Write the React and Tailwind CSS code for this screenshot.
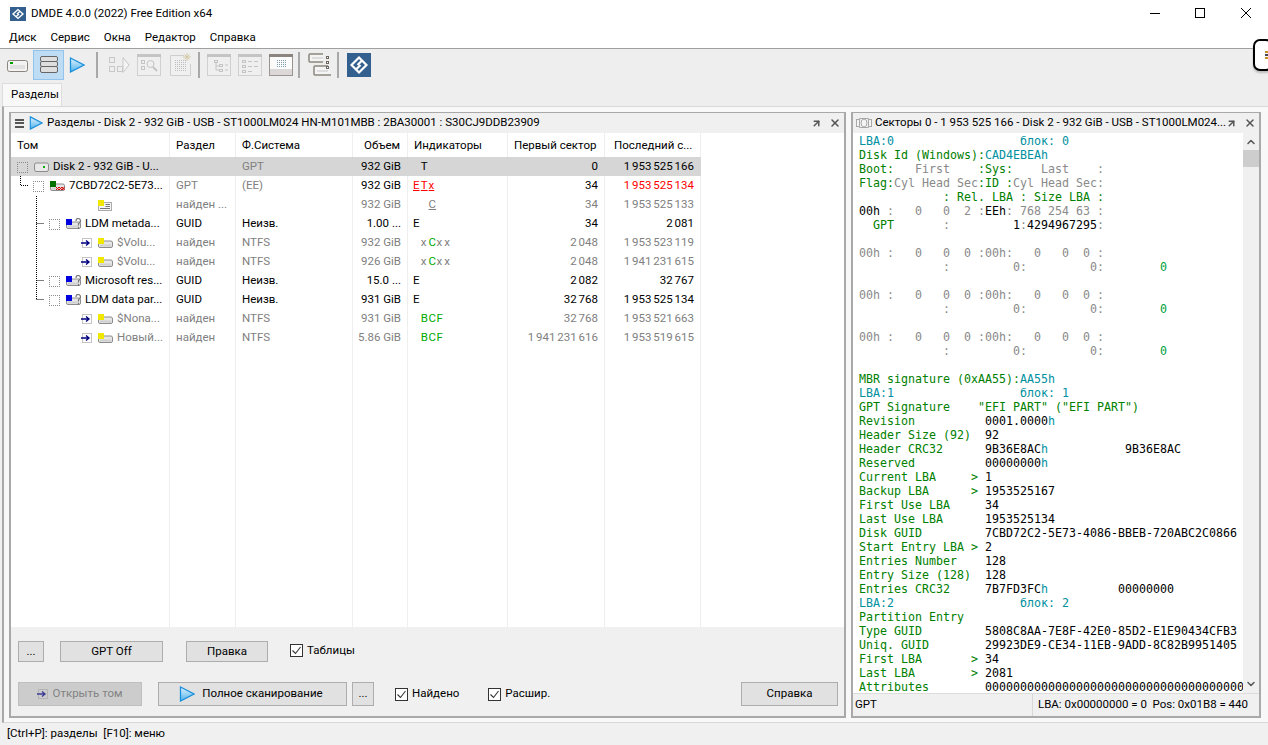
import React from "react";
import { ArrowUpRight, X, ChevronUp, ChevronDown } from "lucide-react";

// цвета строк сектора
const G = "text-[#008000]";
const T = "text-[#0090a0]";
const K = "text-[#000000]";
const S = "text-[#8a8a8a]";
const L = "text-[#00a040]";

const emptyA = [["00h :   0   0  0 :00h:   0   0  0 :", S]];
const emptyB = [["            :         0:         0:", S], ["        ", S], ["0", L]];

const sectorLines = [
  [["LBA:0", T], ["                  блок: 0", T]],
  [["Disk Id (Windows):", G], ["CAD4EBEAh", T]],
  [["Boot:", G], ["   First    ", S], [":Sys:", G], ["    Last    :", S]],
  [["Flag:", G], ["Cyl Head Sec", S], [":ID :", G], ["Cyl Head Sec:", S]],
  [["            : Rel. LBA : Size LBA :", G]],
  [["00h", K], [" :   0   0  2 :", S], ["EEh", K], [": 768 254 63 :", S]],
  [["  GPT", G], ["       :", S], ["         1", K], [":", S], ["4294967295", K], [":", S]],
  [[" ", S]],
  emptyA,
  emptyB,
  [[" ", S]],
  emptyA,
  emptyB,
  [[" ", S]],
  emptyA,
  emptyB,
  [[" ", S]],
  [["MBR signature (0xAA55):", G], ["AA55h", T]],
  [["LBA:1                  блок: 1", T]],
  [["GPT Signature    ", G], ['"EFI PART" ("EFI PART")', G]],
  [["Revision          ", G], ["0001.0000", K], ["h", T]],
  [["Header Size (92)  ", G], ["92", K]],
  [["Header CRC32      ", G], ["9B36E8AC", K], ["h", T], ["           ", K], ["9B36E8AC", K]],
  [["Reserved          ", G], ["00000000", K], ["h", T]],
  [["Current LBA     > ", G], ["1", K]],
  [["Backup LBA      > ", G], ["1953525167", K]],
  [["First Use LBA     ", G], ["34", K]],
  [["Last Use LBA      ", G], ["1953525134", K]],
  [["Disk GUID         ", G], ["7CBD72C2-5E73-4086-BBEB-720ABC2C0866", K]],
  [["Start Entry LBA > ", G], ["2", K]],
  [["Entries Number    ", G], ["128", K]],
  [["Entry Size (128)  ", G], ["128", K]],
  [["Entries CRC32     ", G], ["7B7FD3FC", K], ["h", T], ["          ", K], ["00000000", K]],
  [["LBA:2                  блок: 2", T]],
  [["Partition Entry", G]],
  [["Type GUID         ", G], ["5808C8AA-7E8F-42E0-85D2-E1E90434CFB3", K]],
  [["Uniq. GUID        ", G], ["29923DE9-CE34-11EB-9ADD-8C82B9951405", K]],
  [["First LBA       > ", G], ["34", K]],
  [["Last LBA        > ", G], ["2081", K]],
  [["Attributes        ", G], ["0000000000000000000000000000000000000", K]],
];

const Logo = ({ className }) => (
  <svg viewBox="0 0 24 24" preserveAspectRatio="none" className={className}>
    <rect width="24" height="24" fill="#34608f" />
    <g fill="none" stroke="#fff" strokeWidth="2.2">
      <path d="M14.5 7 L12 4.5 L4.5 12 L9 16.5 L13.5 12" />
      <path d="M9.5 17 L12 19.5 L19.5 12 L15 7.5 L10.5 12" />
    </g>
  </svg>
);

const Play = ({ id, className }) => (
  <svg viewBox="0 0 16 16" className={className}>
    <defs>
      <linearGradient id={id} x1="0" y1="0" x2="0" y2="1">
        <stop offset="0" stopColor="#e2f3fd" />
        <stop offset="1" stopColor="#4fb2ec" />
      </linearGradient>
    </defs>
    <path d="M1.5 1 L15 8 L1.5 15 Z" fill={`url(#${id})`} stroke="#1a8fdc" strokeWidth="1.3" />
  </svg>
);

const HddIcon = () => (
  <svg width="21" height="12" viewBox="0 0 21 12" className="shrink-0">
    <rect x="0.5" y="0.5" width="20" height="11" rx="2" fill="#f2f2f2" stroke="#8a857e" />
    <rect x="3" y="2" width="3" height="2" fill="#00a000" />
    <rect x="3" y="5" width="15" height="4" fill="#e0e0e0" />
  </svg>
);

const StackIcon = () => (
  <svg width="18" height="17" viewBox="0 0 18 17">
    <g fill="#dedede" stroke="#666">
      <rect x="0.5" y="0.5" width="17" height="5" rx="1.5" />
      <rect x="0.5" y="5.5" width="17" height="5" rx="1.5" />
      <rect x="0.5" y="10.5" width="17" height="6" rx="1.5" />
    </g>
  </svg>
);

// серые значки панели инструментов
const GrayWindow = ({ children, bar = "#c4c4c4", fill = "#efefef", border = "#d0d0d0" }) => (
  <svg width="24" height="22" viewBox="0 0 24 22">
    <rect x="0.5" y="0.5" width="23" height="21" fill={fill} stroke={border} />
    <rect x="0" y="0" width="24" height="3" fill={bar} />
    {children}
  </svg>
);

const Dots = ({ x, y, cols, rows, color = "#bdbdbd" }) => {
  const out = [];
  for (let r = 0; r < rows; r++) {
    for (let c = 0; c < cols; c++) {
      out.push(<rect key={`${r}-${c}`} x={x + c * 2} y={y + r * 2} width="1" height="1" fill={color} />);
    }
  }
  return <>{out}</>;
};

const Sep = ({ className }) => <div className={`w-[2px] h-[26px] bg-[#a8a8a8] shrink-0 ${className}`} />;

const Toolbar = () => (
  <div className="h-[35px] bg-[#eeeeee] flex items-center pl-[7px] border-t border-[#a0a0a0] pb-[3px]">
    <div className="mt-[3px]"><HddIcon /></div>
    <div className="w-[31px] h-[30px] ml-[5px] bg-[#bfdcf5] border border-[#92c3ec] flex items-center justify-center">
      <StackIcon />
    </div>
    <Play id="tb-play" className="w-[16px] h-[16px] ml-[5px]" />
    <Sep className="ml-[11px]" />
    <svg width="22" height="18" viewBox="0 0 22 18" className="ml-[10px]">
      <g fill="none" stroke="#c8c8c8">
        <rect x="1.5" y="1.5" width="5" height="5" />
        <rect x="1.5" y="10.5" width="5" height="5" />
        <rect x="9.5" y="10.5" width="5" height="5" />
        <path d="M15 1.5 L21 9 L15 16.5 Z" fill="#f4f4f4" />
      </g>
    </svg>
    <div className="ml-[7px]">
      <GrayWindow>
        <g fill="none" stroke="#c4c4c4">
          <rect x="4.5" y="6.5" width="3" height="3" />
          <rect x="4.5" y="12.5" width="3" height="3" />
          <circle cx="13.5" cy="10" r="3.5" />
          <path d="M16 13 L20 17" strokeWidth="2" />
        </g>
      </GrayWindow>
    </div>
    <svg width="24" height="24" viewBox="0 0 24 24" className="ml-[9px] -mt-[2px]">
      <path d="M0.5 3.5 H14 M0.5 3.5 V23.5 H20.5 V12" fill="#f0f0f0" stroke="#cfcfcf" />
      <Dots x={5} y={8} cols={6} rows={6} />
      <path d="M17 1 V9 M13 5 H21 M14.5 2.5 L19.5 7.5 M19.5 2.5 L14.5 7.5" stroke="#d2c9a6" />
    </svg>
    <Sep className="ml-[4px]" />
    <div className="ml-[7px]">
      <GrayWindow>
        <g fill="none" stroke="#c4c4c4">
          <rect x="7.5" y="6.5" width="3" height="2" />
          <path d="M9 9 V16 H12 M9 12 H12" />
          <rect x="12.5" y="10.5" width="3" height="2" />
          <rect x="12.5" y="15.5" width="3" height="2" />
          <path d="M18 11 H21 M18 16 H21" />
        </g>
      </GrayWindow>
    </div>
    <div className="ml-[7px]">
      <GrayWindow>
        <g fill="none" stroke="#c4c4c4">
          <rect x="4.5" y="6.5" width="3" height="2" />
          <rect x="4.5" y="11.5" width="3" height="2" />
          <rect x="4.5" y="16.5" width="3" height="2" />
          <path d="M10 7.5 H14 M16 7.5 H20 M10 12.5 H14 M16 12.5 H20 M10 17.5 H14" />
        </g>
      </GrayWindow>
    </div>
    <div className="ml-[7px]">
      <GrayWindow bar="#8a8580" fill="#fbfbfb" border="#9a9590">
        <rect x="1" y="15" width="22" height="6" fill="#dcd8d8" />
        <Dots x={8} y={6} cols={5} rows={4} color="#7f9fb5" />
      </GrayWindow>
    </div>
    <Sep className="ml-[5px]" />
    <svg width="24" height="24" viewBox="0 0 24 24" className="ml-[8px]">
      <g fill="#f4f4f4" stroke="#8a857e" strokeWidth="1.5">
        <path d="M15 1 H2 Q1 1 1 2 V8 Q1 9 2 9 H15" />
        <path d="M20 13 H7 Q6 13 6 14 V21 Q6 22 7 22 H23" />
      </g>
      <rect x="4" y="4" width="11" height="2" fill="#ddd" />
      <rect x="9" y="17" width="11" height="2" fill="#ddd" />
      <g fill="#fff" stroke="#6b665f">
        <rect x="18.5" y="3.5" width="2" height="2" />
        <rect x="18.5" y="8.5" width="2" height="2" />
        <rect x="18.5" y="13.5" width="2" height="2" />
      </g>
    </svg>
    <Sep className="ml-[5px]" />
    <Logo className="w-[24px] h-[24px] ml-[8px]" />
  </div>
);

const BoxDotted = () => <span className="block w-[11px] h-[11px] border border-dotted border-[#8c8c8c] shrink-0" />;

const DiskShape = () => (
  <>
    <path d="M2 4 H13 Q14.5 4 14.5 6 V9 Q14.5 10.5 13 10.5 H2 Q0.5 10.5 0.5 9 V6 Q0.5 4 2 4 Z" fill="#e6e6e6" stroke="#8c8c8c" />
    <rect x="2" y="7.5" width="11" height="2" fill="#cfcfcf" />
  </>
);

const VolIcon = ({ color, mark }) => (
  <svg width="15" height="12" viewBox="0 0 15 12" className="shrink-0">
    <DiskShape />
    <rect x="0" y="1" width="6" height="6" fill={color} />
    {mark === "q" && (
      <path d="M10 3 Q10 0.5 12 0.5 Q14.5 0.5 14.5 3 Q14.5 4.5 12.5 5.5 V7.5 M12.5 9 V11" fill="none" stroke="#777" strokeWidth="1.2" />
    )}
    {mark === "x" && <path d="M6 7 L9 10 L12 7 L14.5 10 M6 10 L9 7 L12 10 L14.5 7" fill="none" stroke="#e00000" />}
  </svg>
);

const ListIcon = () => (
  <svg width="14" height="12" viewBox="0 0 14 12" className="shrink-0">
    <rect x="0.5" y="3.5" width="13" height="8" fill="#f4f4f4" stroke="#aaa" />
    <rect x="0" y="1" width="6" height="6" fill="#f0e800" />
    <path d="M7.5 5.5 H12 M7.5 7.5 H12 M2 9.5 H12" stroke="#777" />
  </svg>
);

const ArrowBox = () => (
  <svg width="11" height="11" viewBox="0 0 11 11" className="shrink-0">
    <rect x="1.5" y="0.5" width="9" height="9" fill="none" stroke="#888" strokeDasharray="1 1" />
    <path d="M0 5 H7 M5 2.5 L8 5 L5 7.5" fill="none" stroke="#000080" strokeWidth="1.4" />
  </svg>
);

const rows = [
  { pad: "pl-[6px]", box: true, icon: <svg width="15" height="10" viewBox="0 0 15 10" className="shrink-0"><path d="M2 1 H13 Q14.5 1 14.5 3 V7 Q14.5 9.5 13 9.5 H2 Q0.5 9.5 0.5 7 V3 Q0.5 1 2 1 Z" fill="#e8e8e8" stroke="#8c8c8c" /><rect x="9" y="4" width="2" height="2" fill="#00b000" /></svg>, name: "Disk 2 - 932 GiB - U...", part: "", fs: "GPT", fsGray: true, size: "932 GiB", ind: [[" "], ["T"]], first: "0", last: "1 953 525 166", sel: true },
  { pad: "pl-[22px]", box: true, icon: <VolIcon color="#007000" mark="x" />, name: "7CBD72C2-5E73...", part: "GPT", partGray: true, fs: "(EE)", fsGray: true, size: "932 GiB", ind: [["E", "red"], ["T", "red"], ["x", "red"]], first: "34", last: "1 953 525 134", lastRed: true },
  { pad: "pl-[87px]", icon: <ListIcon />, name: "", gray: true, part: "найден ...", fs: "", size: "932 GiB", ind: [[" "], [" "], ["C", "under"]], first: "34", last: "1 953 525 133" },
  { pad: "pl-[38px]", box: true, icon: <VolIcon color="#0000e0" mark="q" />, name: "LDM metada...", part: "GUID", fs: "Неизв.", size: "1.00 ...", ind: [["E"]], first: "34", last: "2 081" },
  { pad: "pl-[70px]", arrow: true, icon: <VolIcon color="#f0e800" />, name: "$Volu...", gray: true, part: "найден", fs: "NTFS", size: "932 GiB", ind: [[" "], ["x"], ["C", "green"], ["x"], ["x"]], first: "2 048", last: "1 953 523 119" },
  { pad: "pl-[70px]", arrow: true, icon: <VolIcon color="#f0e800" />, name: "$Volu...", gray: true, part: "найден", fs: "NTFS", size: "926 GiB", ind: [[" "], ["x"], ["C", "green"], ["x"], ["x"]], first: "2 048", last: "1 941 231 615" },
  { pad: "pl-[38px]", box: true, icon: <VolIcon color="#0000e0" mark="q" />, name: "Microsoft res...", part: "GUID", fs: "Неизв.", size: "15.0 ...", ind: [["E"]], first: "2 082", last: "32 767" },
  { pad: "pl-[38px]", box: true, icon: <VolIcon color="#0000e0" mark="q" />, name: "LDM data par...", part: "GUID", fs: "Неизв.", size: "931 GiB", ind: [["E"]], first: "32 768", last: "1 953 525 134" },
  { pad: "pl-[70px]", arrow: true, icon: <VolIcon color="#f0e800" />, name: "$Nona...", gray: true, part: "найден", fs: "NTFS", size: "931 GiB", ind: [[" "], ["B", "green"], ["C", "green"], ["F", "green"]], first: "32 768", last: "1 953 521 663" },
  { pad: "pl-[70px]", arrow: true, icon: <VolIcon color="#f0e800" />, name: "Новый...", gray: true, part: "найден", fs: "NTFS", size: "5.86 GiB", ind: [[" "], ["B", "green"], ["C", "green"], ["F", "green"]], first: "1 941 231 616", last: "1 953 519 615" },
];

const gray = "text-[#808080]";
const dark = "text-[#000000]";
const cellBase = "h-[19px] flex items-center whitespace-nowrap -mr-px relative pt-[1px]";

const Indicators = ({ ind, isGray }) => (
  <div className="flex">
    {ind.map(([ch, kind], i) => (
      <span
        key={i}
        className={`w-[7.8px] ${kind === "red" ? "text-[#ff0000] underline" : kind === "green" ? "text-[#00aa00]" : kind === "under" ? "text-[#808080] underline" : isGray ? gray : dark}`}
      >
        {ch === " " ? "\u00a0" : ch}
      </span>
    ))}
  </div>
);

const columns = [
  { title: "Том", w: "w-[159px]", head: "pl-[6px]", cell: (r) => (
    <div className={`flex items-center w-full ${r.pad}`}>
      {r.box && <BoxDotted />}
      {r.arrow && <ArrowBox />}
      <span className={r.box ? "ml-[6px]" : r.arrow ? "ml-[6px]" : ""}>{r.icon}</span>
      {r.name && <span className={`ml-[4px] ${r.gray ? gray : dark}`}>{r.name}</span>}
    </div>
  ) },
  { title: "Раздел", w: "w-[66px]", head: "pl-[6px]", cell: (r) => <span className={`pl-[6px] ${r.gray || r.partGray ? gray : dark}`}>{r.part}</span> },
  { title: "Ф.Система", w: "w-[117px]", head: "pl-[6px]", cell: (r) => <span className={`pl-[6px] ${r.gray || r.fsGray ? gray : dark}`}>{r.fs}</span> },
  { title: "Объем", w: "w-[55px]", head: "pl-[11px]", cell: (r) => <span className={`w-full text-right pr-[7px] ${r.gray ? gray : dark}`}>{r.size}</span> },
  { title: "Индикаторы", w: "w-[100px]", head: "pl-[6px]", cell: (r) => <div className="pl-[5px]"><Indicators ind={r.ind} isGray={r.gray} /></div> },
  { title: "Первый сектор", w: "w-[97px]", head: "pl-[6px]", cell: (r) => <span className={`w-full text-right pr-[7px] [word-spacing:-1px] ${r.gray ? gray : dark}`}>{r.first}</span> },
  { title: "Последний с...", w: "w-[96px]", head: "pl-[9px]", cell: (r) => <span className={`w-full text-right pr-[7px] [word-spacing:-1px] ${r.lastRed ? "text-[#ff0000]" : r.gray ? gray : dark}`}>{r.last}</span> },
];

const TreeLines = () => (
  <svg width="60" height="160" viewBox="0 0 60 160" className="absolute left-0 top-[24px] pointer-events-none">
    <g fill="none" stroke="#000" strokeDasharray="1 1">
      <path d="M9.5 19 V28.5 H17" />
      <path d="M25.5 39 V142.5 M25.5 66.5 H33 M25.5 123.5 H33 M25.5 142.5 H33" />
    </g>
  </svg>
);

const Button = ({ className, children }) => (
  <button className={`bg-[#e1e1e1] border border-[#adadad] flex items-center justify-center shrink-0 ${className}`}>
    {children}
  </button>
);

const Check = ({ label, className }) => (
  <label className={`flex items-center ${className}`}>
    <span className="w-[13px] h-[13px] border border-[#333] bg-white flex items-center justify-center">
      <svg width="11" height="11" viewBox="0 0 11 11">
        <path d="M1.5 5.5 L4.5 8.5 L9.5 2" fill="none" stroke="#333" strokeWidth="1.1" />
      </svg>
    </span>
    <span className="ml-[4px]">{label}</span>
  </label>
);

const PanelIcons = () => (
  <div className="flex items-center gap-[7px] text-[#555]">
    <ArrowUpRight size={11} strokeWidth={3.2} />
    <X size={12} strokeWidth={3} />
  </div>
);

const PartitionsPanel = () => (
  <div className="w-[837px] h-[606px] border-2 border-[#a9a9a9] border-t-[1px] flex flex-col bg-white">
    <div className="h-[20px] bg-[#f0f0f0] flex items-center pl-[4px] pr-[3px]">
      <div className="w-[9px] flex flex-col gap-[1.5px]">
        <span className="h-[2px] bg-[#555]" />
        <span className="h-[2px] bg-[#555]" />
        <span className="h-[2px] bg-[#555]" />
      </div>
      <Play id="head-play" className="w-[14px] h-[14px] ml-[5px]" />
      <span className="ml-[4px] whitespace-nowrap">Разделы - Disk 2 - 932 GiB - USB - ST1000LM024 HN-M101MBB : 2BA30001 : S30CJ9DDB23909</span>
      <div className="ml-auto"><PanelIcons /></div>
    </div>
    <div className="flex-1 flex relative overflow-hidden">
      {columns.map((c) => (
        <div key={c.title} className={`${c.w} border-r border-[#eeeeee] shrink-0`}>
          <div className={`h-[24px] flex items-center whitespace-nowrap pt-[1px] ${c.head}`}>{c.title}</div>
          {rows.map((r, i) => (
            <div key={i} className={`${cellBase} ${r.sel ? "bg-[#d6d6d6]" : ""}`}>{c.cell(r)}</div>
          ))}
        </div>
      ))}
      <TreeLines />
    </div>
    <div className="h-[89px] bg-[#f0f0f0] shrink-0 flex flex-col pl-[7px] pr-[6px] pt-[14px]">
      <div className="flex items-start h-[21px]">
        <Button className="w-[26px] h-[21px]">...</Button>
        <Button className="w-[103px] h-[21px] ml-[16px]">GPT Off</Button>
        <Button className="w-[82px] h-[21px] ml-[23px]">Правка</Button>
        <Check label="Таблицы" className="ml-[22px] mt-[3px]" />
      </div>
      <div className="flex items-center h-[24px] mt-[20px]">
        <button className="w-[124px] h-[24px] bg-[#cccccc] border border-[#bfbfbf] flex items-center justify-center text-[#838383] shrink-0">
          <span className="mr-[4px] opacity-70"><ArrowBox /></span>Открыть том
        </button>
        <Button className="w-[189px] h-[24px] ml-[16px]">
          <Play id="scan-play" className="w-[16px] h-[16px] mr-[7px] -ml-[3px]" />Полное сканирование
        </Button>
        <Button className="w-[22px] h-[24px] ml-[5px]">...</Button>
        <Check label="Найдено" className="ml-[21px]" />
        <Check label="Расшир." className="ml-[29px]" />
        <Button className="w-[97px] h-[24px] ml-auto">Справка</Button>
      </div>
    </div>
  </div>
);

const SectorsPanel = () => (
  <div className="w-[410px] h-[606px] border-2 border-[#a9a9a9] border-t-[1px] flex flex-col bg-white">
    <div className="h-[20px] bg-[#f0f0f0] flex items-center pl-[3px] pr-[5px] shrink-0">
      <svg width="16" height="12" viewBox="0 0 16 12" className="shrink-0">
        <g fill="#f4f4f4" stroke="#a8a8a8">
          <rect x="0.5" y="2.5" width="3" height="7" />
          <rect x="12.5" y="2.5" width="3" height="7" />
          <path d="M3.5 1.5 H12.5 V10.5 H3.5 Z" />
          <ellipse cx="8" cy="6" rx="3" ry="4" />
        </g>
      </svg>
      <span className="ml-[3px] whitespace-nowrap">Секторы 0 - 1 953 525 166 - Disk 2 - 932 GiB - USB - ST1000LM024...</span>
      <div className="ml-auto"><PanelIcons /></div>
    </div>
    <div className="flex flex-1 overflow-hidden">
      <div className="w-[392px] overflow-hidden pl-[6px] pt-[1px] font-['DejaVu_Sans_Mono',monospace] text-[11.63px] leading-[14px]">
        {sectorLines.map((line, i) => (
          <div key={i} className="h-[14px] whitespace-pre">
            {line.map(([txt, color], j) => <span key={j} className={color}>{txt}</span>)}
          </div>
        ))}
      </div>
      <div className="w-[16px] bg-[#f0f0f0] flex flex-col items-center shrink-0">
        <ChevronUp size={12} strokeWidth={3} className="text-[#555] mt-[3px]" />
        <div className="w-full h-[17px] bg-[#cdcdcd] mt-[2px]" />
        <div className="flex-1" />
        <ChevronDown size={12} strokeWidth={3} className="text-[#555] mb-[3px]" />
      </div>
    </div>
    <div className="h-[23px] bg-[#f0f0f0] border-t border-[#dcdcdc] flex items-center shrink-0">
      <span className="pl-[2px] w-[180px] shrink-0 border-r border-[#d8d8d8] h-full flex items-center">GPT</span>
      <span className="pl-[5px] whitespace-nowrap">LBA: 0x00000000 = 0&nbsp; Pos: 0x01B8 = 440</span>
    </div>
  </div>
);

export default function App() {
  return (
    <div className="w-[1268px] h-[745px] overflow-hidden relative flex flex-col bg-[#f0f0f0] text-[#000] text-[11.5px] leading-none font-['Roboto',sans-serif]">
      {/* заголовок окна */}
      <div className="h-[26px] bg-white flex items-center pt-[1px] shrink-0">
        <Logo className="w-[16px] h-[14px] ml-[10px]" />
        <span className="ml-[5px]">DMDE 4.0.0 (2022) Free Edition x64</span>
        <div className="ml-auto flex items-center text-black pb-[2px]">
          <svg width="10" height="10" viewBox="0 0 10 10" className="mr-[35px]"><path d="M0 5.5 H10" stroke="#000" /></svg>
          <svg width="10" height="10" viewBox="0 0 10 10" className="mr-[36px]"><rect x="0.5" y="0.5" width="9" height="9" fill="none" stroke="#000" /></svg>
          <svg width="10" height="10" viewBox="0 0 10 10" className="mr-[17px]"><path d="M0 0 L10 10 M10 0 L0 10" stroke="#000" /></svg>
        </div>
      </div>
      {/* меню */}
      <div className="h-[22px] bg-white flex items-center pl-[9px] gap-[14px] pt-[1px] shrink-0">
        {["Диск", "Сервис", "Окна", "Редактор", "Справка"].map((m) => <span key={m}>{m}</span>)}
      </div>
      <Toolbar />
      <div className="h-[23px] bg-[#eeeeee] flex items-end pl-[2px] shrink-0">
        <div className="w-[60px] h-[23px] bg-[#f8f8f8] border border-b-0 border-[#dddddd] flex items-center pl-[8px]">Разделы</div>
      </div>
      <div className="flex-1 border-t border-l-2 border-b border-[#d8d8d8] bg-[#f8f8f8] ml-[2px] pl-[5px] pt-[5px] flex gap-[5px] min-h-0 border-l-[#a9a9a9]">
        <PartitionsPanel />
        <SectorsPanel />
      </div>
      <div className="h-[22px] flex items-center pl-[7px] shrink-0">[Ctrl+P]: разделы&nbsp; [F10]: меню</div>
      {/* всплывающая подсказка у края */}
      <div className="absolute left-[1253px] top-[39px] w-[20px] h-[32px] bg-white border-2 border-black rounded-[7px] shadow-[0_2px_2px_#bbb] flex items-center pl-[10px] overflow-hidden">
        <svg width="3" height="8" viewBox="0 0 3 8">
          <rect width="3" height="2" fill="#c8902a" />
          <rect y="3" width="3" height="2" fill="#445" />
          <rect y="6" width="3" height="2" fill="#c8902a" />
        </svg>
      </div>
    </div>
  );
}
